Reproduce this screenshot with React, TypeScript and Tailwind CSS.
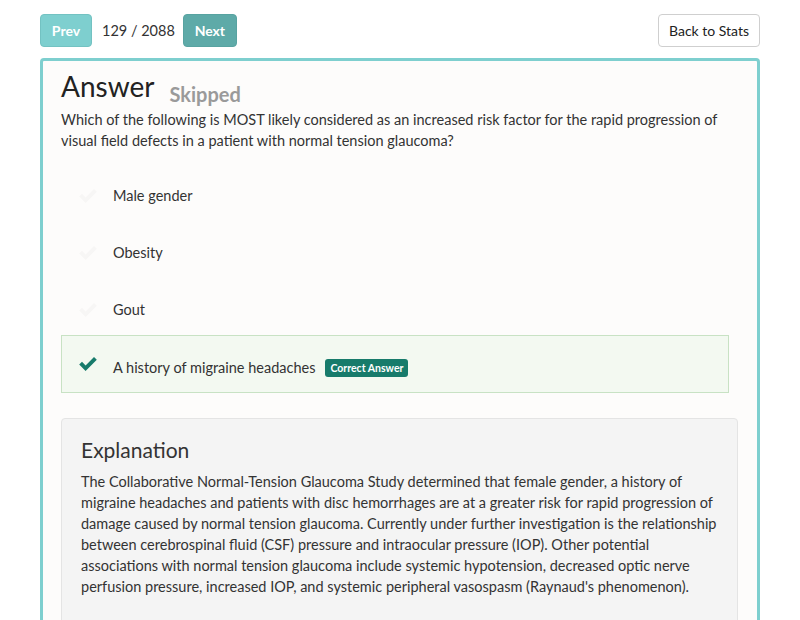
import React from "react";

const font = { fontFamily: "Lato, 'Open Sans', sans-serif" };

function Check({ className }: { className?: string }) {
  return (
    <svg viewBox="0 0 20 16" className={className} fill="currentColor">
      <path d="M1.2 8.6 L4 5.8 L7.6 9.4 L16 1 L18.8 3.8 L7.6 15 Z" />
    </svg>
  );
}

export default function App() {
  const options = ["Male gender", "Obesity", "Gout"];
  return (
    <div className="w-[800px] h-[620px] overflow-hidden bg-white text-[#333]" style={font}>
      <div className="flex items-center px-10 pt-[14px]">
        <button className="h-[33px] w-[52px] rounded-[4px] border border-[#73c2c2] bg-[#7ecfcf] text-[14px] font-bold text-white">
          Prev
        </button>
        <span className="ml-[10px] mr-[8px] text-[14.5px] text-[#333]">129 / 2088</span>
        <button className="h-[33px] w-[54px] rounded-[4px] border border-[#58a3a1] bg-[#5eaaa8] text-[14px] font-bold text-white">
          Next
        </button>
        <div className="flex-1" />
        <button className="h-[33px] w-[102px] rounded-[4px] border border-[#cfcfcf] bg-white text-[14px] text-[#222]">
          Back to Stats
        </button>
      </div>
      <div className="mx-10 mt-[11px] rounded-[4px] border-[3px] border-[#7ecfcf] bg-[#fdfcfb] pl-[18px] pr-[19px] pt-[7px] pb-10">
        <div className="flex items-end">
          <h1 className="text-[28px] leading-[36px] text-[#222]">Answer</h1>
          <span className="ml-[15px] mb-[-5px] text-[20px] font-bold text-[#9a9a9a]">Skipped</span>
        </div>
        <p className="mt-[5px] text-[14.5px] leading-[21px] text-[#333]">
          Which of the following is MOST likely considered as an increased risk factor for the rapid progression of visual field defects in a patient with normal tension glaucoma?
        </p>
        <div className="mt-[16px] flex flex-col">
          {options.map((o) => (
            <div key={o} className="flex h-[57px] items-center pl-[17px]">
              <Check className="h-[16px] w-[20px] text-[#f7f6f5]" />
              <span className="ml-[15px] text-[14.5px] text-[#333]">{o}</span>
            </div>
          ))}
          <div className="mt-[-3px] mr-[9px] flex h-[58px] items-center border border-[#c8e2c4] bg-[#f3f9f1] pl-[16px]">
            <Check className="h-[16px] w-[20px] text-[#177b6b]" />
            <div className="flex items-center pt-[7px]">
              <span className="ml-[15px] text-[14.5px] text-[#333]">A history of migraine headaches</span>
              <span className="ml-[10px] rounded-[3px] bg-[#177b6b] px-[5px] py-[2px] text-[10.5px] font-bold leading-[14px] text-white">
                Correct Answer
              </span>
            </div>
          </div>
        </div>
        <div className="mt-[25px] rounded-[4px] border border-[#e4e4e4] bg-[#f4f4f4] px-[19px] pt-[18px] pb-10">
          <h2 className="text-[21px] leading-[26px] text-[#333]">Explanation</h2>
          <p className="mt-[8px] text-[14.5px] leading-[21px] text-[#333]">
            The Collaborative Normal-Tension Glaucoma Study determined that female gender, a history of migraine headaches and patients with disc hemorrhages are at a greater risk for rapid progression of damage caused by normal tension glaucoma. Currently under further investigation is the relationship between cerebrospinal fluid (CSF) pressure and intraocular pressure (IOP). Other potential associations with normal tension glaucoma include systemic hypotension, decreased optic nerve perfusion pressure, increased IOP, and systemic peripheral vasospasm (Raynaud's phenomenon).
          </p>
        </div>
      </div>
    </div>
  );
}
